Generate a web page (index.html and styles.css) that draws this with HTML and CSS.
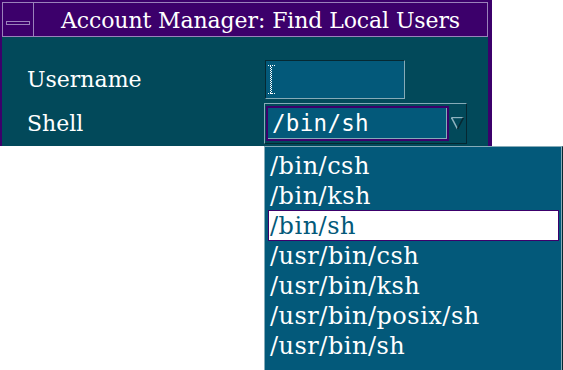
FILE: index.html
```html
<!DOCTYPE html>
<html lang="en">
<head>
  <meta charset="UTF-8" />
  <title>Account Manager: Find Local Users</title>
  <link rel="stylesheet" href="styles.css">
</head>
<body>
  <div class="window">
    <div class="titlebar">
      <div class="menu-btn"><span class="menu-glyph"></span></div>
      <div class="title">Account Manager: Find Local Users</div>
    </div>

    <div class="content">
      <div class="label">Username</div>
      <div class="field">
        <svg class="ibeam" width="7" height="29" viewBox="0 0 7 29">
          <path d="M0 0.5h7M0 28.5h7" stroke="#fff" stroke-width="1" stroke-dasharray="1 1" fill="none"/>
          <path d="M2.5 1v27" stroke="#fff" stroke-width="1" stroke-dasharray="1 1" fill="none"/>
          <path d="M3.5 2v27" stroke="#fff" stroke-width="1" stroke-dasharray="1 1" fill="none"/>
        </svg>
      </div>

      <div class="label">Shell</div>
      <div class="combo">
        <div class="combo-text">/bin/sh</div>
        <svg class="arrow" width="13" height="13" viewBox="0 0 13 13">
          <path d="M0.5 0.5h12" stroke="#8fb3bf" stroke-width="1.4"/>
          <path d="M0.5 0.5L6.5 12" stroke="#8fb3bf" stroke-width="1.6"/>
          <path d="M12.5 0.5L6.5 12" stroke="#062731" stroke-width="1.6"/>
        </svg>
      </div>
    </div>
  </div>

  <ul class="dropdown">
    <li>/bin/csh</li>
    <li>/bin/ksh</li>
    <li class="selected">/bin/sh</li>
    <li>/usr/bin/csh</li>
    <li>/usr/bin/ksh</li>
    <li>/usr/bin/posix/sh</li>
    <li>/usr/bin/sh</li>
  </ul>
</body>
</html>
```

FILE: styles.css
```css
body {
  margin: 0;
  background: #fff;
  font-family: 'DejaVu Serif', serif;
  color: #fff;
  width: 563px;
  height: 370px;
  overflow: hidden;
  position: relative;
}

.window {
  width: 492px;
  height: 146px;
  box-sizing: border-box;
  background: #3c006b;
  padding: 2px 4px 0 2px;
  display: flex;
  flex-direction: column;
}

.titlebar {
  display: flex;
  height: 35px;
  border: 1px solid #9a82bb;
  box-sizing: border-box;
}

.menu-btn {
  width: 30px;
  border-right: 1px solid #9a82bb;
  display: flex;
  justify-content: center;
  align-items: center;
}

.menu-glyph {
  width: 22px;
  height: 2px;
  border: 1px solid #9a82bb;
  margin-top: 6px;
}

.title {
  flex: 1;
  text-align: center;
  font-size: 22px;
  letter-spacing: -0.1px;
  line-height: 33px;
  padding-top: 1px;
}

.content {
  flex: 1;
  background: #02495a;
  display: grid;
  grid-template-columns: 237px auto;
  grid-auto-rows: min-content;
  row-gap: 4px;
  align-items: center;
  padding: 23px 0 0 25px;
}

.label {
  font-size: 22px;
  line-height: 26px;
}

.field {
  width: 140px;
  height: 39px;
  box-sizing: border-box;
  background: #03597a;
  border-top: 1px solid #052933;
  border-left: 1px solid #052933;
  border-right: 1px solid #86abb8;
  border-bottom: 1px solid #86abb8;
  padding: 4px 0 0 2px;
  margin-left: 1px;
}

.ibeam {
  display: block;
}

.combo {
  width: 203px;
  height: 41px;
  box-sizing: border-box;
  border-top: 1px solid #86abb8;
  border-left: 1px solid #86abb8;
  border-right: 1px solid #062731;
  border-bottom: 1px solid #062731;
  padding: 2px 0 0 1px;
  display: flex;
  align-items: flex-start;
}

.combo-text {
  width: 183px;
  height: 35px;
  box-sizing: border-box;
  background: #03597a;
  border: 2px solid #3c006b;
  box-shadow: inset -1px -1px 0 #86abb8;
  font-family: 'DejaVu Sans Mono', monospace;
  font-size: 22.5px;
  letter-spacing: 0.3px;
  line-height: 30px;
  padding-left: 4px;
}

.arrow {
  margin: 11px 0 0 2px;
}

.dropdown {
  position: absolute;
  left: 264px;
  top: 146px;
  width: 299px;
  height: 240px;
  box-sizing: border-box;
  margin: 0;
  padding: 3px 3px 0 3px;
  list-style: none;
  background: #03597a;
  border-top: 1px solid #86abb8;
  border-left: 1px solid #86abb8;
  border-right: 1px solid #062731;
  box-shadow: inset -1px 0 0 #86abb8;
}

.dropdown li {
  height: 30px;
  box-sizing: border-box;
  border: 1px solid transparent;
  font-size: 24px;
  letter-spacing: 0.5px;
  line-height: 30px;
  padding-left: 1px;
  white-space: nowrap;
}

.dropdown li.selected {
  background: #fff;
  border-color: #3c006b;
  color: #03597a;
  height: 31px;
  margin-bottom: -1px;
}
```
